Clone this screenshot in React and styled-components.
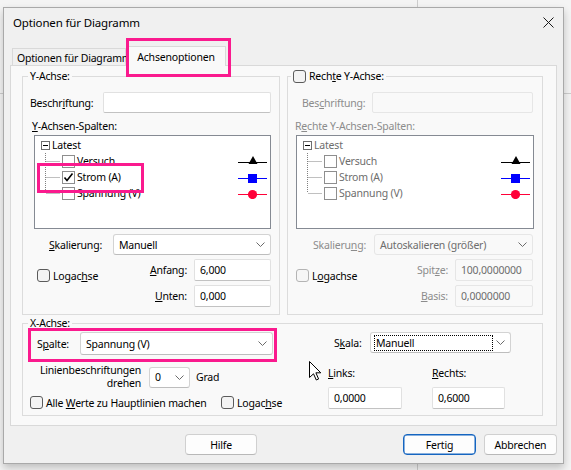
import React from "react";
import styled, { createGlobalStyle } from "styled-components";

const GlobalStyle = createGlobalStyle`
  html, body { margin: 0; padding: 0; }
  body {
    background: #f4f4f4;
    font-family: "Noto Sans", "Segoe UI", sans-serif;
    font-size: 10.5px;
    letter-spacing: -0.2px;
    color: #000;
  }
`;

const Screen = styled.div`
  position: relative;
  width: 571px;
  height: 470px;
  overflow: hidden;
  box-sizing: border-box;
  padding: 7px 0 0 3px;
  background:
    linear-gradient(#cdcdcd, #cdcdcd) 417px 0 / 1px 100% no-repeat,
    linear-gradient(#cdcdcd, #cdcdcd) 0 93px / 100% 1px no-repeat,
    #f4f4f4;
`;

const Dialog = styled.div`
  width: 561px;
  height: 457px;
  box-sizing: border-box;
  border: 1px solid #a9a9a9;
  background: #f0f0f0;
  display: flex;
  flex-direction: column;
  box-shadow: 0 4px 8px rgba(0, 0, 0, 0.22);
`;

const TitleBar = styled.div`
  height: 29px;
  display: flex;
  align-items: center;
  padding: 0 9px;
  font-size: 11.5px;
  letter-spacing: -0.15px;
`;

const Title = styled.span`
  flex: 1;
`;

const TabStrip = styled.div`
  height: 28px;
  display: flex;
  align-items: flex-end;
  padding-left: 8px;
`;

const Tab = styled.div`
  position: relative;
  box-sizing: border-box;
  display: flex;
  align-items: center;
  justify-content: ${(p) => (p.$active ? "center" : "flex-start")};
  white-space: nowrap;
  border: 1px solid #d9d9d9;
  border-bottom: none;
  width: ${(p) => (p.$active ? 100 : 114)}px;
  height: ${(p) => (p.$active ? 20 : 17)}px;
  margin-bottom: ${(p) => (p.$active ? -1 : 0)}px;
  background: ${(p) => (p.$active ? "#f9f9f9" : "#f0f0f0")};
  z-index: ${(p) => (p.$active ? 1 : 0)};
  padding: ${(p) => (p.$active ? "0" : "1px 0 0 4px")};
`;

const Callout = styled.div`
  position: absolute;
  box-sizing: border-box;
  border: 3px solid #fa1a8e;
  left: ${(p) => p.$l}px;
  top: ${(p) => p.$t}px;
  width: ${(p) => p.$w}px;
  height: ${(p) => p.$h}px;
  pointer-events: none;
  z-index: 3;
`;

const Panel = styled.div`
  margin: 0 6px;
  height: 361px;
  box-sizing: border-box;
  border: 1px solid #d9d9d9;
  background: #f9f9f9;
  padding: 3px 0 0 11px;
  display: grid;
  grid-template-columns: 258px 256px;
  grid-template-rows: 246px 100px;
  column-gap: 7px;
  row-gap: 1px;
  align-content: start;
`;

const Group = styled.fieldset`
  margin: 0;
  padding: 0;
  min-width: 0;
  box-sizing: border-box;
  border: 1px solid #dcdcdc;
  grid-column: ${(p) => (p.$span ? "1 / -1" : "auto")};
`;

const Legend = styled.legend`
  margin-left: ${(p) => p.$indent}px;
  padding: 0 2px;
  height: 14px;
  line-height: 14px;
  display: flex;
  align-items: center;
  gap: 3px;
`;

const Row = styled.div`
  position: relative;
  display: flex;
  align-items: center;
  justify-content: ${(p) => p.$justify || "space-between"};
  gap: ${(p) => p.$gap || 0}px;
  height: ${(p) => p.$h || 21}px;
  margin-top: ${(p) => p.$mt || 0}px;
  padding: 0 ${(p) => p.$pr || 0}px 0 ${(p) => p.$pl || 0}px;
`;

const Label = styled.span`
  color: ${(p) => (p.$muted ? "#8c8c8c" : "#000")};
  white-space: nowrap;
  flex-shrink: 0;
  width: ${(p) => (p.$w ? `${p.$w}px` : "auto")};
  text-align: ${(p) => p.$align || "left"};
`;

const Caption = styled.div`
  height: 14px;
  line-height: 14px;
  margin: ${(p) => p.$mt}px 0 0 ${(p) => p.$ml}px;
  color: ${(p) => (p.$muted ? "#8c8c8c" : "#000")};
`;

const TextBox = styled.div`
  width: ${(p) => p.$w}px;
  height: ${(p) => p.$h || 21}px;
  box-sizing: border-box;
  flex-shrink: 0;
  background: ${(p) => (p.$disabled ? "#f9f9f9" : "#fff")};
  border: 1px solid ${(p) => (p.$disabled ? "#e6e6e6" : "#e1e1e1")};
  border-bottom-color: ${(p) => (p.$disabled ? "#e6e6e6" : "#c2c2c2")};
  border-radius: 2px;
  padding: 0 5px;
  display: flex;
  align-items: center;
  color: ${(p) => (p.$disabled ? "#6d6d6d" : "#000")};
`;

const SelectBox = styled.div`
  width: ${(p) => p.$w}px;
  height: ${(p) => p.$h || 21}px;
  box-sizing: border-box;
  flex-shrink: 0;
  background: ${(p) => (p.$disabled ? "#f9f9f9" : "#fff")};
  border: 1px solid ${(p) => (p.$disabled ? "#e6e6e6" : "#d3d3d3")};
  border-bottom-color: ${(p) => (p.$disabled ? "#e6e6e6" : "#bdbdbd")};
  border-radius: 3px;
  padding: 0 5px 0 4px;
  display: flex;
  align-items: center;
  gap: 4px;
  color: ${(p) => (p.$disabled ? "#6d6d6d" : "#000")};
`;

const SelectText = styled.span`
  flex: 1;
  white-space: nowrap;
  overflow: hidden;
  padding-left: 1px;
  outline: ${(p) => (p.$focus ? "1px dotted #000" : "none")};
  line-height: ${(p) => (p.$focus ? "14px" : "normal")};
`;

const Tree = styled.div`
  position: relative;
  height: 94px;
  box-sizing: border-box;
  margin: ${(p) => p.$mt}px ${(p) => p.$mr}px 0 ${(p) => p.$ml}px;
  border: 1px solid #858a93;
  background: #fff;
  padding-top: 1px;
  color: ${(p) => (p.$muted ? "#6d6d6d" : "#000")};
`;

const TreeRow = styled.div`
  position: relative;
  height: 16px;
  display: flex;
  align-items: center;
  padding: 0 3px 0 ${(p) => p.$pl}px;
`;

const Expander = styled.span`
  width: 9px;
  height: 9px;
  box-sizing: border-box;
  border: 1px solid #6e6e6e;
  display: flex;
  align-items: center;
  justify-content: center;
  margin-right: 2px;
  &::after {
    content: "";
    width: 5px;
    height: 1px;
    background: #000;
  }
`;

const ItemBox = styled.span`
  width: 13px;
  height: 13px;
  box-sizing: border-box;
  border: 1px solid #8e8e8e;
  background: #fff;
  display: flex;
  align-items: center;
  justify-content: center;
  margin: 0 2px 0 1px;
`;

const ItemText = styled.span`
  flex: 1;
  white-space: nowrap;
`;

const CheckLabel = styled.span`
  display: flex;
  align-items: center;
  gap: 3px;
  height: 13px;
  white-space: nowrap;
  width: ${(p) => (p.$w ? `${p.$w}px` : "auto")};
  margin-top: ${(p) => p.$mt || 0}px;
  color: ${(p) => (p.$muted ? "#8c8c8c" : "#000")};
`;

const Box = styled.span`
  width: 13px;
  height: 13px;
  box-sizing: border-box;
  border: 1px solid ${(p) => (p.$muted ? "#b4b4b4" : "#5b5b5b")};
  border-radius: 3px;
  background: ${(p) => (p.$muted ? "#f6f6f6" : "#f3f3f3")};
  flex-shrink: 0;
`;

const RangeBlock = styled.div`
  display: flex;
  margin-top: 4px;
  padding: 0 ${(p) => p.$pr}px 0 ${(p) => p.$pl}px;
`;

const RangeFields = styled.div`
  margin-left: auto;
  display: flex;
  flex-direction: column;
  gap: 4px;
`;

const XGrid = styled.div`
  display: grid;
  grid-template-columns: 305px 1fr;
`;

const Column = styled.div`
  display: flex;
  flex-direction: column;
`;

const TwoLine = styled.div`
  width: 118px;
  text-align: right;
  line-height: 13px;
  flex-shrink: 0;
`;

const Unit = styled.span`
  margin-left: -2px;
`;

const EdgeGrid = styled.div`
  display: grid;
  grid-template-columns: 104px 104px;
  margin-top: 13px;
`;

const EdgeCell = styled.div`
  display: flex;
  flex-direction: column;
  gap: 7px;
`;

const Footer = styled.div`
  display: flex;
  align-items: center;
  margin-top: 8px;
  padding: 0 6px 0 181px;
  gap: 8px;
`;

const Button = styled.div`
  width: ${(p) => p.$w}px;
  height: 21px;
  box-sizing: border-box;
  display: flex;
  align-items: center;
  justify-content: center;
  background: #fdfdfd;
  border: 1px solid ${(p) => (p.$primary ? "#1565c0" : "#d0d0d0")};
  border-bottom-color: ${(p) => (p.$primary ? "#1565c0" : "#b8b8b8")};
  border-radius: 4px;
  box-shadow: ${(p) => (p.$primary ? "inset 0 0 0 0.5px #1565c0" : "none")};
  margin-right: ${(p) => (p.$push ? "auto" : "0")};
`;

const Cursor = styled.svg`
  position: absolute;
  left: 309px;
  top: 361px;
`;

function Chevron() {
  return (
    <svg width="9" height="5" viewBox="0 0 9 5">
      <polyline points="0.5,0.5 4.5,4.5 8.5,0.5" fill="none" stroke="#6b6b6b" strokeWidth="1" />
    </svg>
  );
}

function Select({ w, h, value, disabled, focus }) {
  return (
    <SelectBox $w={w} $h={h} $disabled={disabled}>
      <SelectText $focus={focus}>{value}</SelectText>
      <Chevron />
    </SelectBox>
  );
}

function Connector({ last }) {
  return (
    <svg width="16" height="16" viewBox="0 0 16 16" style={{ flexShrink: 0 }}>
      <line x1="0.5" y1="0" x2="0.5" y2={last ? 8 : 16} stroke="#808080" strokeDasharray="1 1" />
      <line x1="1.5" y1="8.5" x2="15" y2="8.5" stroke="#808080" strokeDasharray="1 1" />
    </svg>
  );
}

function Marker({ kind }) {
  const color = kind === "tri" ? "#000" : kind === "sq" ? "#0000ff" : "#ff0038";
  return (
    <svg width="29" height="12" viewBox="0 0 29 12">
      <line x1="0" y1="7.5" x2="29" y2="7.5" stroke={color} />
      {kind === "tri" && <polygon points="10.5,9 15,1 19.5,9" fill="#000" />}
      {kind === "sq" && <rect x="10" y="3" width="9" height="9" fill={color} />}
      {kind === "dot" && <circle cx="14.5" cy="7.5" r="4.6" fill={color} />}
    </svg>
  );
}

const seriesItems = [
  { name: "Versuch", marker: "tri" },
  { name: "Strom (A)", marker: "sq" },
  { name: "Spannung (V)", marker: "dot" },
];

function SeriesTree({ muted, checked, highlight, mt, ml, mr }) {
  return (
    <Tree $muted={muted} $mt={mt} $ml={ml} $mr={mr}>
      <TreeRow $pl={6}>
        <Expander />
        <ItemText>Latest</ItemText>
      </TreeRow>
      {seriesItems.map((item, i) => (
        <TreeRow key={item.name} $pl={10}>
          <Connector last={i === seriesItems.length - 1} />
          <ItemBox>
            {checked === item.name && (
              <svg width="11" height="11" viewBox="0 0 11 11">
                <polyline points="1.5,5.5 4,8.5 9.5,1.5" fill="none" stroke="#000" strokeWidth="1.6" />
              </svg>
            )}
          </ItemBox>
          <ItemText>{item.name}</ItemText>
          <Marker kind={item.marker} />
          {highlight === item.name && <Callout $l={2} $t={-6} $w={107} $h={30} />}
        </TreeRow>
      ))}
    </Tree>
  );
}

export default function App() {
  return (
    <Screen>
      <GlobalStyle />
      <Dialog>
        <TitleBar>
          <Title>Optionen für Diagramm</Title>
          <svg width="11" height="11" viewBox="0 0 11 11">
            <path d="M0.5 0.5 L10.5 10.5 M10.5 0.5 L0.5 10.5" stroke="#1a1a1a" strokeWidth="1" />
          </svg>
        </TitleBar>

        <TabStrip>
          <Tab>Optionen für Diagramm</Tab>
          <Tab $active>
            Achsenoptionen
            <Callout $l={-1} $t={-9} $w={105} $h={39} />
          </Tab>
        </TabStrip>

        <Panel>
          <Group>
            <Legend $indent={5}>Y-Achse:</Legend>
            <Row $mt={9} $pl={7} $pr={8}>
              <Label>Beschr<u>i</u>ftung:</Label>
              <TextBox $w={168} />
            </Row>
            <Caption $mt={6} $ml={9}>
              <u>Y</u>-Achsen-Spalten:
            </Caption>
            <SeriesTree checked="Strom (A)" highlight="Strom (A)" mt={2} ml={11} mr={8} />
            <Row $mt={5} $pl={26} $pr={8}>
              <Label><u>S</u>kalierung:</Label>
              <Select w={158} value="Manuell" />
            </Row>
            <RangeBlock $pl={14} $pr={8}>
              <CheckLabel $mt={10}>
                <Box />
                <span>Logac<u>h</u>se</span>
              </CheckLabel>
              <RangeFields>
                <Row $h={22} $gap={7} $justify="flex-end">
                  <Label><u>A</u>nfang:</Label>
                  <TextBox $w={77} $h={22}>6,000</TextBox>
                </Row>
                <Row $h={22} $gap={7} $justify="flex-end">
                  <Label><u>U</u>nten:</Label>
                  <TextBox $w={77} $h={22}>0,000</TextBox>
                </Row>
              </RangeFields>
            </RangeBlock>
          </Group>

          <Group>
            <Legend $indent={3}>
              <Box />
              <span>Rech<u>t</u>e Y-Achse:</span>
            </Legend>
            <Row $mt={9} $pl={14} $pr={9}>
              <Label $muted>Bes<u>c</u>hriftung:</Label>
              <TextBox $w={161} $disabled />
            </Row>
            <Caption $mt={6} $ml={7} $muted>
              R<u>e</u>chte Y-Achsen-Spalten:
            </Caption>
            <SeriesTree muted mt={2} ml={8} mr={8} />
            <Row $mt={5} $pl={25} $pr={9}>
              <Label $muted>Skalieru<u>n</u>g:</Label>
              <Select w={159} value="Autoskalieren (größer)" disabled />
            </Row>
            <RangeBlock $pl={8} $pr={9}>
              <CheckLabel $mt={10}>
                <Box $muted />
                <span>L<u>o</u>gachse</span>
              </CheckLabel>
              <RangeFields>
                <Row $h={22} $gap={7} $justify="flex-end">
                  <Label $muted>Spit<u>z</u>e:</Label>
                  <TextBox $w={78} $h={22} $disabled>100,0000000</TextBox>
                </Row>
                <Row $h={22} $gap={7} $justify="flex-end">
                  <Label $muted><u>B</u>asis:</Label>
                  <TextBox $w={78} $h={22} $disabled>0,0000000</TextBox>
                </Row>
              </RangeFields>
            </RangeBlock>
          </Group>

          <Group $span>
            <Legend $indent={5}>X-Achse:</Legend>
            <XGrid>
              <Column>
                <Row $mt={2} $h={23} $pl={14} $justify="flex-start">
                  <Label $w={43}>S<u>p</u>alte:</Label>
                  <Select w={193} h={23} value="Spannung (V)" />
                  <Callout $l={5} $t={-4} $w={249} $h={34} />
                </Row>
                <Row $mt={9} $h={26} $justify="flex-start" $gap={8}>
                  <TwoLine>
                    Linienbeschriftungen
                    <br />
                    drehen
                  </TwoLine>
                  <Select w={41} value="0" />
                  <Unit>Grad</Unit>
                </Row>
                <Row $mt={6} $h={13} $pl={7} $justify="flex-start">
                  <CheckLabel $w={191}>
                    <Box />
                    <span>Alle <u>W</u>erte zu Hauptlinien machen</span>
                  </CheckLabel>
                  <CheckLabel>
                    <Box />
                    <span>Logac<u>h</u>se</span>
                  </CheckLabel>
                </Row>
              </Column>
              <Column>
                <Row $mt={2} $pl={6} $justify="flex-start">
                  <Label $w={36}>S<u>k</u>ala:</Label>
                  <Select w={141} value="Manuell" focus />
                </Row>
                <EdgeGrid>
                  <EdgeCell>
                    <Label><u>L</u>inks:</Label>
                    <TextBox $w={74} $h={22}>0,0000</TextBox>
                  </EdgeCell>
                  <EdgeCell>
                    <Label><u>R</u>echts:</Label>
                    <TextBox $w={73} $h={22}>0,6000</TextBox>
                  </EdgeCell>
                </EdgeGrid>
              </Column>
            </XGrid>
          </Group>
        </Panel>

        <Footer>
          <Button $w={72} $push>Hilfe</Button>
          <Button $w={73} $primary>Fertig</Button>
          <Button $w={73}>Abbrechen</Button>
        </Footer>
      </Dialog>

      <Cursor width="13" height="20" viewBox="0 0 13 20">
        <path
          d="M0.5 0.5 L0.5 16.5 L4.5 12.8 L7.3 19 L9.6 18 L6.9 11.8 L11.8 11.8 Z"
          fill="#fff"
          stroke="#000"
          strokeWidth="1"
          strokeLinejoin="round"
        />
      </Cursor>
    </Screen>
  );
}
